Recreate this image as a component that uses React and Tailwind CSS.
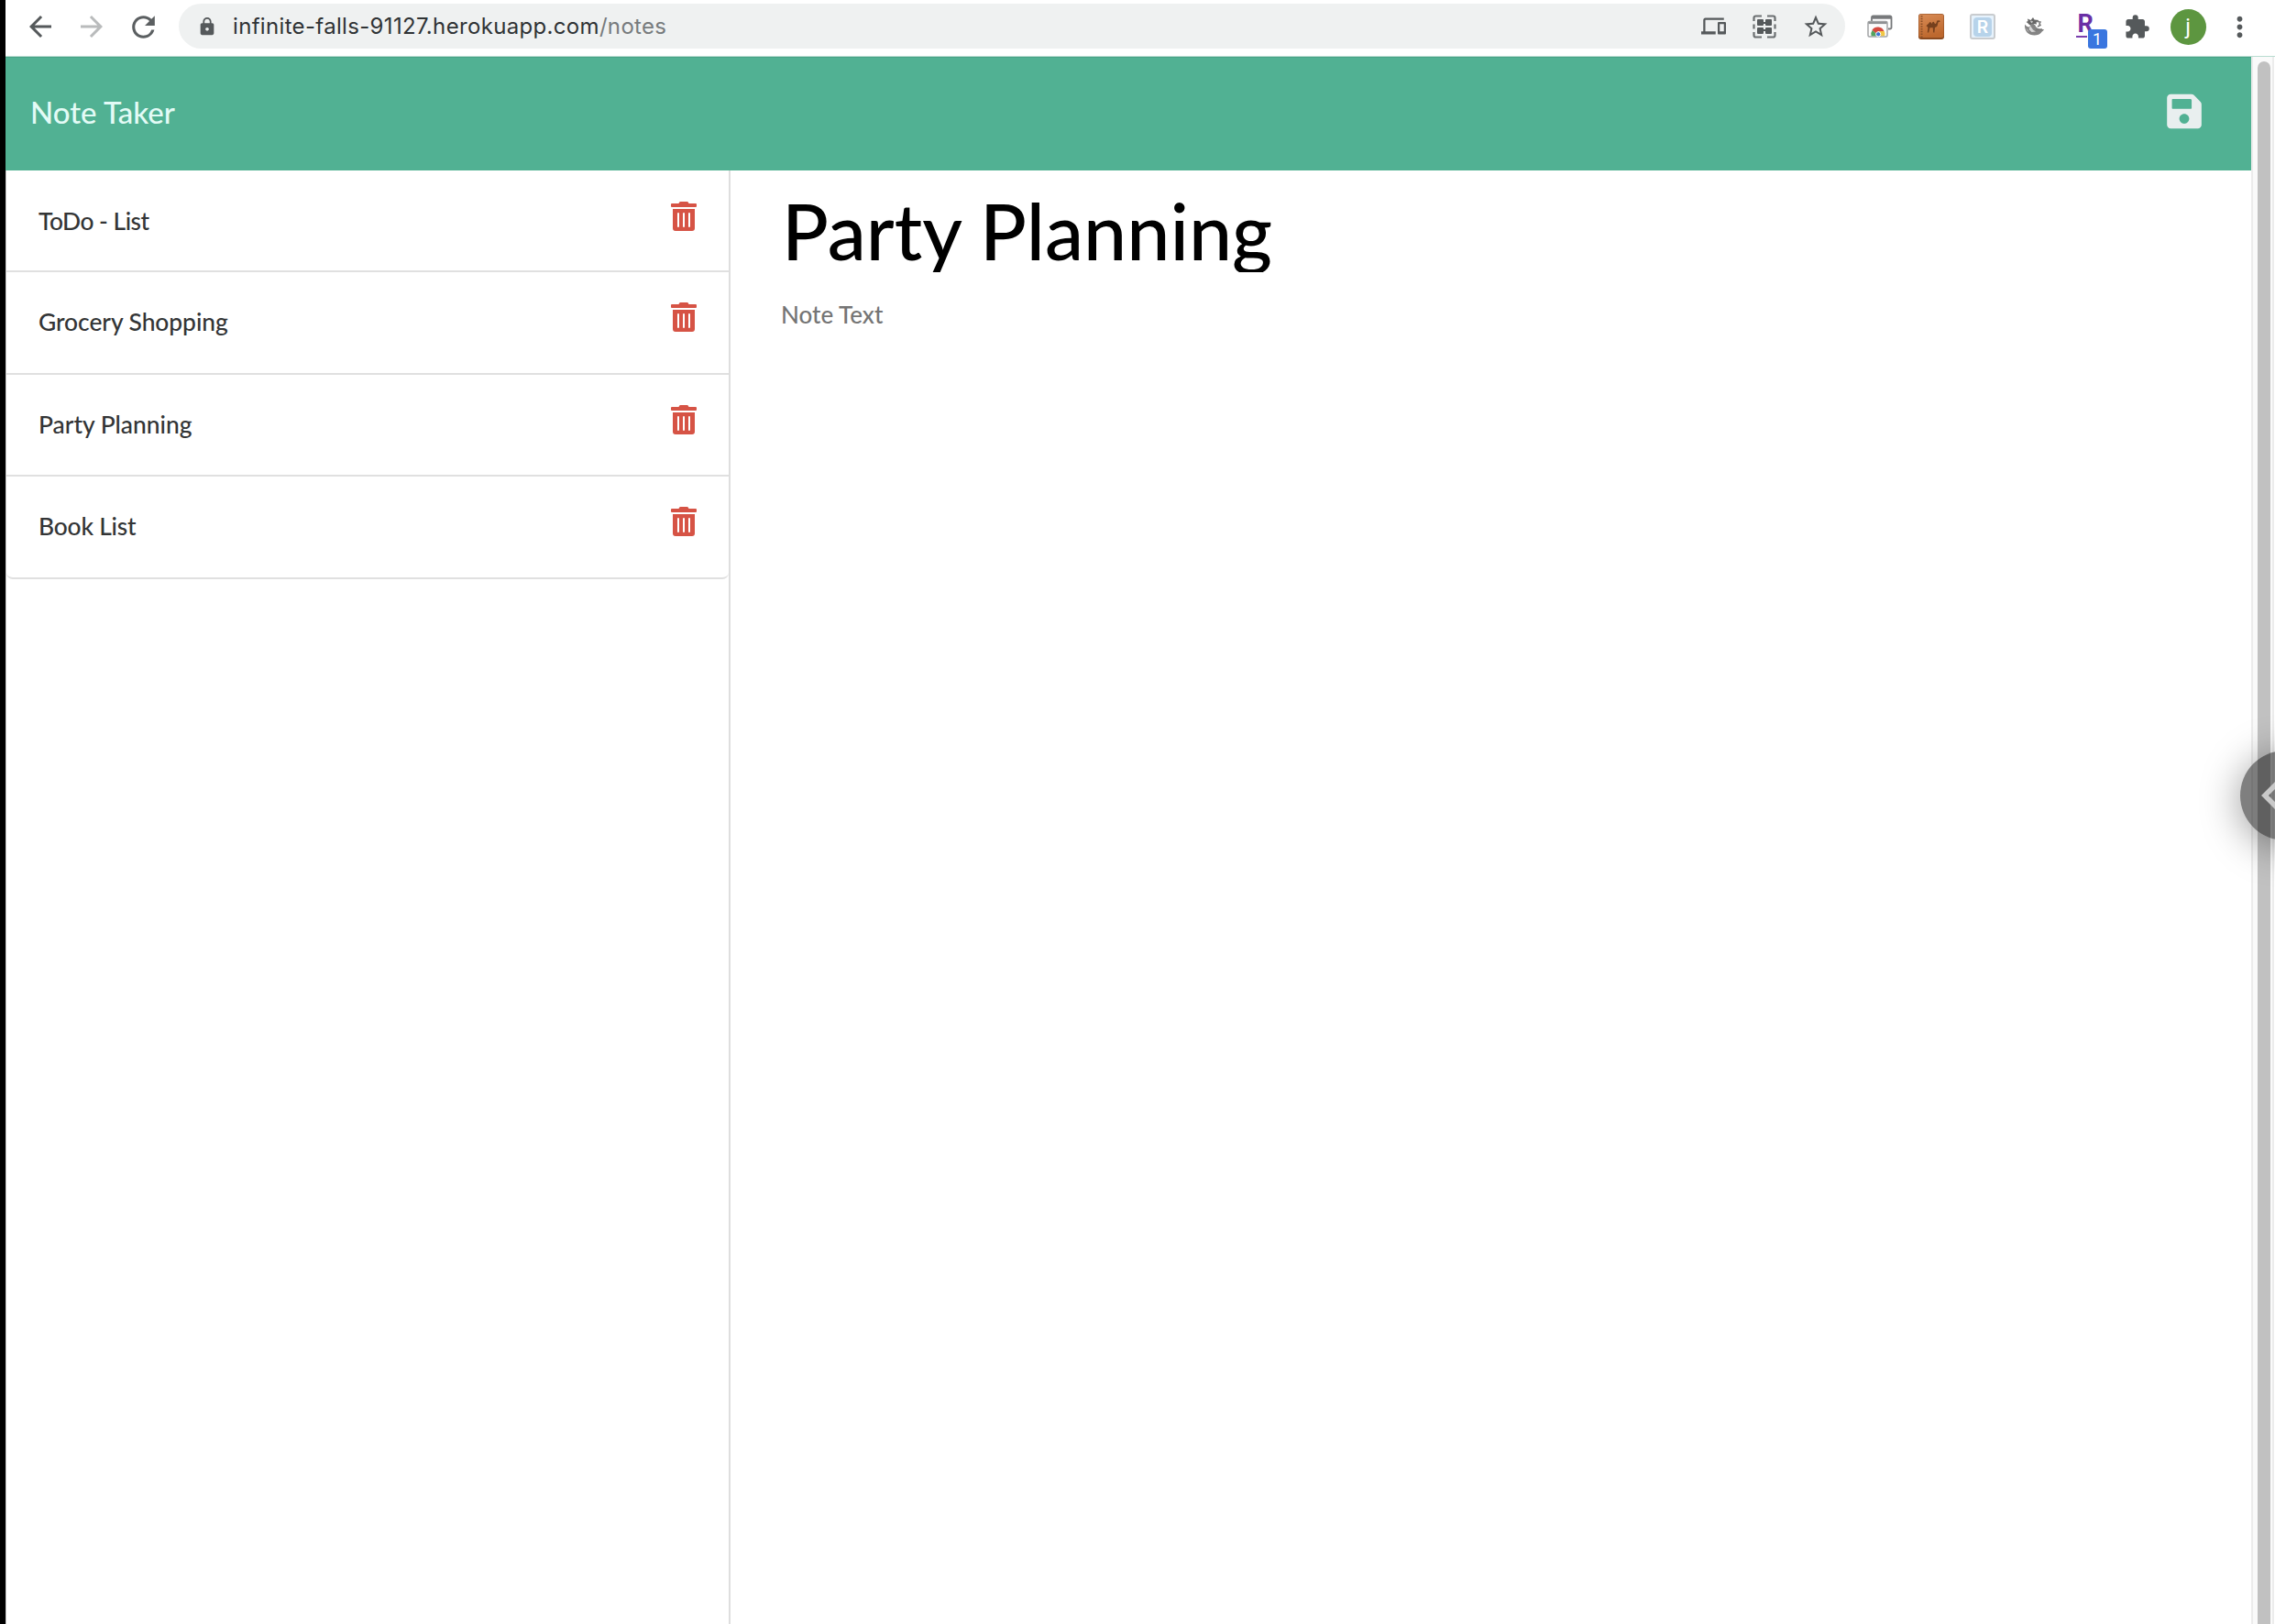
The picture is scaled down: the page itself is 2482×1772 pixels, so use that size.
import React from "react";
import { FaSave, FaTrashAlt } from "react-icons/fa";
import {
  MdArrowBack,
  MdArrowForward,
  MdExtension,
  MdLock,
  MdMoreVert,
  MdOutlineDevices,
  MdRefresh,
  MdStarBorder,
} from "react-icons/md";

const NOTES = [
  { title: "ToDo - List", className: "h-[111px] pt-[1px] tracking-[-0.5px]" },
  { title: "Grocery Shopping", className: "h-[112px] tracking-[-0.05px]" },
  { title: "Party Planning", className: "h-[111px]" },
  { title: "Book List", className: "h-[112px] rounded-b-[7px] tracking-[-0.2px]" },
];

function Slot({ children }) {
  return <div className="flex h-[58px] w-14 shrink-0 items-center justify-center">{children}</div>;
}

function QrIcon() {
  return (
    <svg className="h-[26px] w-[26px]" viewBox="0 0 26 26" fill="none">
      <path
        d="M1.500 7V3.500a2 2 0 0 1 2-2H10M16 1.500h6.500a2 2 0 0 1 2 2V7M24.500 19v3.500a2 2 0 0 1-2 2H16M10 24.500H3.500a2 2 0 0 1-2-2V19M1.500 10.500v5M24.500 10.500v5"
        stroke="#6b6f71"
        strokeWidth="2.200"
      />
      <g fill="#55595b">
        <rect x="5" y="5" width="7" height="7" rx="1" />
        <rect x="14" y="5" width="7" height="7" rx="1" />
        <rect x="5" y="14" width="7" height="7" rx="1" />
        <rect x="14" y="14" width="7" height="7" rx="1" />
        <path d="M11 8h4v2h-4zM11 16h4v2h-4z" />
      </g>
    </svg>
  );
}

function WindowsIcon() {
  return (
    <svg className="h-[26px] w-[28px]" viewBox="0 0 28 26" fill="none">
      <path d="M5 7V3a1.500 1.500 0 0 1 1.500-1.500h18.500A1.500 1.500 0 0 1 26.500 3v11a1.500 1.500 0 0 1-1.500 1.500h-2" stroke="#77797b" strokeWidth="1.800" />
      <path d="M5.500 3.200h21" stroke="#77797b" strokeWidth="3" />
      <rect x="1" y="7.500" width="21" height="16.500" rx="1.500" fill="#fbfbfb" stroke="#a2a4a6" strokeWidth="1.500" />
      <path d="M1.500 9h20" stroke="#8e9092" strokeWidth="2.200" />
      <path d="M4.500 23.200a7.500 7.500 0 0 1 1.300-6.500l4.700 4.300-.5 2.200z" fill="#53a35f" />
      <path d="M5.500 16.700a7.500 7.500 0 0 1 13 1.300h-6l-2.500 2.500z" fill="#d5483e" />
      <path d="M13 18h5.800a8 8 0 0 1 .2 5.200h-5z" fill="#f2c744" />
      <circle cx="12.200" cy="21.300" r="2.600" fill="#3f74d2" stroke="#fff" />
    </svg>
  );
}

function CamelIcon() {
  return (
    <svg className="h-7 w-7" viewBox="0 0 28 28">
      <defs>
        <linearGradient id="leather" x1="0" y1="0" x2="0.300" y2="1">
          <stop offset="0" stopColor="#d98c56" />
          <stop offset="1" stopColor="#bd682e" />
        </linearGradient>
      </defs>
      <rect width="28" height="28" rx="3" fill="#8a4a20" />
      <rect x="0.500" y="0.500" width="27" height="25.500" rx="2.500" fill="url(#leather)" />
      <path d="M3.500 2v24" stroke="#8b5029" strokeWidth="2" strokeDasharray="1.500 1.300" />
      <path
        d="M8.500 13.500c1-2 2.500-2 3.300-3.700.5-1.200 1.700-1.200 2.100.2.300 1 .8.900 1.200-.2.600-1.500 1.900-1.200 2.300.2.400 1.300 1.600 1.300 2.100.1l.8-2.500 2.600-.3 1 1.300-2.300.6-.9 3.600c-.4 1.500-1.600 2-2.700 2.200l-.6 5.500h-1.200l-.5-5.200h-3.200l-1.300 5.200h-1.400l.6-5.200-1-1.500z"
        fill="#76401d"
      />
    </svg>
  );
}

function DragonIcon() {
  return (
    <svg className="h-[22px] w-[24px]" viewBox="0 0 24 22">
      <path d="M5 2.500l3.500 1.500L11 1l1.500 2.500 5 .5-3 2.500.5 2-3-.5-1.500 2.500-3.500-1.500-2-2L3.500 6l2-1z" fill="#676767" />
      <path d="M2 8.500c1 1.500 2.500 3 5 3l2.500-4 3.500 1.500c1.500 4 4.500 5.500 10 5-1 2-2 2-3 3.500-1.500 2-4 3-7.500 3C6 20.500 1.500 16.500 2 8.500z" fill="#848484" />
      <path d="M15.500 5.500l3.500.5-1 2 1 1.500-3 1.500M14 14.500l7-.5" stroke="#777" strokeWidth="1.500" fill="none" />
      <path d="M8 10l3 4.500 3 2-4.500.5-3-3z" fill="#d6d6d6" />
      <path d="M8.500 5l2 .5-1 1.500zM4 13.500l2 3" fill="#ddd" stroke="#c8c8c8" strokeWidth="0.800" />
    </svg>
  );
}

function Toolbar() {
  return (
    <div className="flex h-[61px] shrink-0 items-start bg-white pl-[10px] text-[#55595b]">
      <Slot>
        <MdArrowBack className="h-9 w-9" />
      </Slot>
      <Slot>
        <MdArrowForward className="h-9 w-9 text-[#b9bbbc]" />
      </Slot>
      <Slot>
        <MdRefresh className="h-[37px] w-[37px] text-[#5b5f61]" />
      </Slot>
      <div className="ml-[11px] mt-1 flex h-[49px] w-[1818px] shrink-0 items-center rounded-full bg-[#eff1f1] pl-5">
        <MdLock className="h-[22px] w-[22px] shrink-0" />
        <div className="ml-[17px] flex-1 whitespace-nowrap pt-[1px] font-['Inter',sans-serif] text-[24px] tracking-[0.33px] text-[#2f3335]">
          infinite-falls-91127.herokuapp.com<span className="text-[#777b7d]">/notes</span>
        </div>
        <Slot>
          <MdOutlineDevices className="h-[27px] w-[27px]" />
        </Slot>
        <Slot>
          <QrIcon />
        </Slot>
        <Slot>
          <MdStarBorder className="h-[30px] w-[30px]" />
        </Slot>
        <div className="w-[4px]" />
      </div>
      <div className="ml-[10px] flex">
        <Slot>
          <WindowsIcon />
        </Slot>
        <Slot>
          <CamelIcon />
        </Slot>
        <Slot>
          <div className="flex h-7 w-7 items-center justify-center rounded-[3px] border-2 border-[#c9cccf] bg-[#e6f2fc]">
            <div className="flex h-[21px] w-[20px] items-center justify-center rounded-[4px] bg-[#b7d3ea] font-['Inter',sans-serif] text-[19px] leading-none font-semibold text-white">
              R
            </div>
          </div>
        </Slot>
        <Slot>
          <DragonIcon />
        </Slot>
        <Slot>
          <div className="relative h-[26px] w-[19px] font-['Roboto',sans-serif]">
            <div className="h-[20px] pl-[1px] text-[27px] leading-[20px] font-bold text-[#6a2fa5]">R</div>
            <div className="mt-[3px] ml-[-1px] h-[2px] w-[12px] bg-[#7a3fae]" />
            <div className="absolute left-[12px] top-[16px] flex h-[21px] w-[21px] items-center justify-center rounded-[3px] bg-[#3a76df] text-[18px] leading-none text-white">
              1
            </div>
          </div>
        </Slot>
        <Slot>
          <MdExtension className="h-[29px] w-[29px]" />
        </Slot>
        <Slot>
          <div className="flex h-[39px] w-[39px] items-center justify-center rounded-full bg-[#5d9640] font-['Roboto',sans-serif] text-[24px] leading-none text-white">
            j
          </div>
        </Slot>
        <Slot>
          <MdMoreVert className="ml-[1px] h-[35px] w-[35px]" />
        </Slot>
      </div>
    </div>
  );
}

export default function App() {
  return (
    <div className="relative flex h-[1772px] w-[2482px] overflow-hidden bg-white font-['Lato',sans-serif]">
      <div className="w-[6px] shrink-0 bg-black" />
      <div className="flex min-w-0 flex-1 flex-col">
        <Toolbar />
        <div className="flex min-h-0 flex-1 border-t border-[#b9dcd1]">
          <div className="flex w-[2450px] shrink-0 flex-col">
            <nav className="flex h-[124px] shrink-0 items-center justify-between border-t border-[#49a387] bg-[#51b193] pr-[54px] pl-[27px]">
              <span className="mt-[-5px] text-[33px] leading-10 font-medium text-[#e3fbf6]">Note Taker</span>
              <FaSave className="mt-[-6px] h-[43px] w-[38px] text-[#e9efef]" />
            </nav>
            <div className="flex flex-1">
              <aside className="w-[791px] shrink-0 border-r-2 border-l border-r-[#dedede] border-l-[#c9c9c9]">
                <ul>
                  {NOTES.map((note) => (
                    <li
                      key={note.title}
                      className={`flex items-start justify-between border-b-2 border-[#e0e0e0] pr-[35px] pl-[35px] ${note.className}`}
                    >
                      <span className="pt-[38px] text-[26.4px] leading-8 font-medium text-[#333536]">{note.title}</span>
                      <FaTrashAlt className="mt-[33px] h-8 w-7 text-[#d65345]" />
                    </li>
                  ))}
                </ul>
              </aside>
              <main className="flex-1 pl-[56px]">
                <h1 className="mt-[20px] h-[91px] overflow-hidden text-[84.3px] leading-[91px] font-medium text-black">
                  Party Planning
                </h1>
                <p className="mt-[30px] ml-[-1px] text-[26px] leading-8 font-medium text-[#757575]">Note Text</p>
              </main>
            </div>
          </div>
          <div className="w-[25px] border-x-2 border-[#ececec] bg-[#fafafa] pt-[5px] pl-[5px]">
            <div className="h-full w-[14px] rounded-t-full bg-[#c1c1c1]" />
          </div>
        </div>
      </div>
      <div className="absolute left-[2444px] top-[819px] flex h-[98px] w-[98px] items-center rounded-full bg-black/50 pl-[23px] shadow-[0_6px_44px_rgba(0,0,0,0.4)]">
        <svg className="h-[50px] w-[30px]" viewBox="0 0 30 50">
          <path d="M26 3L4 25l22 22" fill="none" stroke="#c9c9c9" strokeWidth="5.600" />
        </svg>
      </div>
    </div>
  );
}
